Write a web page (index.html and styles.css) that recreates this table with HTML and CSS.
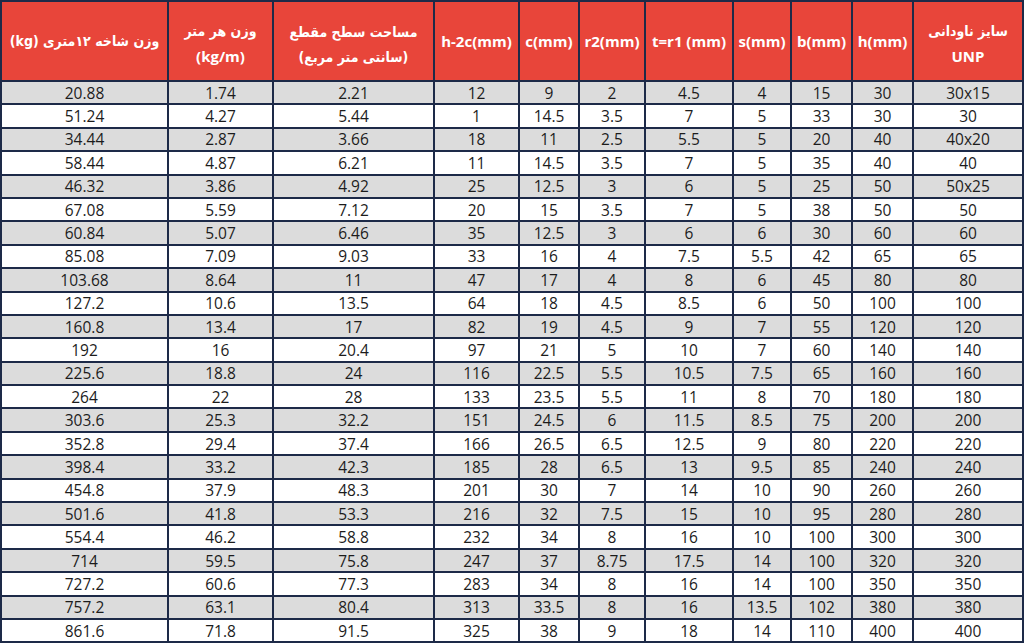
FILE: index.html
```html
<!DOCTYPE html>
<html lang="fa">
<head>
<meta charset="utf-8">
<title>UNP</title>
<link rel="stylesheet" href="styles.css">
</head>
<body>
<table class="unp">
<colgroup>
<col class="c1"><col class="c2"><col class="c3"><col class="c4"><col class="c5"><col class="c6"><col class="c7"><col class="c8"><col class="c9"><col class="c10"><col class="c11">
</colgroup>
<thead>
<tr>
<th dir="rtl" class="fa">وزن شاخه ۱۲متری (kg)</th>
<th dir="rtl" class="fa two">وزن هر متر<br><span dir="ltr" class="lat">(kg/m)</span></th>
<th dir="rtl" class="fa two">مساحت سطح مقطع<br>(سانتی متر مربع)</th>
<th>h-2c(mm)</th>
<th>c(mm)</th>
<th>r2(mm)</th>
<th>t=r1 (mm)</th>
<th>s(mm)</th>
<th>b(mm)</th>
<th>h(mm)</th>
<th dir="rtl" class="fa two">سایز ناودانی<br><span class="lat">UNP</span></th>
</tr>
</thead>
<tbody>
<tr><td>20.88</td><td>1.74</td><td>2.21</td><td>12</td><td>9</td><td>2</td><td>4.5</td><td>4</td><td>15</td><td>30</td><td>30x15</td></tr>
<tr><td>51.24</td><td>4.27</td><td>5.44</td><td>1</td><td>14.5</td><td>3.5</td><td>7</td><td>5</td><td>33</td><td>30</td><td>30</td></tr>
<tr><td>34.44</td><td>2.87</td><td>3.66</td><td>18</td><td>11</td><td>2.5</td><td>5.5</td><td>5</td><td>20</td><td>40</td><td>40x20</td></tr>
<tr><td>58.44</td><td>4.87</td><td>6.21</td><td>11</td><td>14.5</td><td>3.5</td><td>7</td><td>5</td><td>35</td><td>40</td><td>40</td></tr>
<tr><td>46.32</td><td>3.86</td><td>4.92</td><td>25</td><td>12.5</td><td>3</td><td>6</td><td>5</td><td>25</td><td>50</td><td>50x25</td></tr>
<tr><td>67.08</td><td>5.59</td><td>7.12</td><td>20</td><td>15</td><td>3.5</td><td>7</td><td>5</td><td>38</td><td>50</td><td>50</td></tr>
<tr><td>60.84</td><td>5.07</td><td>6.46</td><td>35</td><td>12.5</td><td>3</td><td>6</td><td>6</td><td>30</td><td>60</td><td>60</td></tr>
<tr><td>85.08</td><td>7.09</td><td>9.03</td><td>33</td><td>16</td><td>4</td><td>7.5</td><td>5.5</td><td>42</td><td>65</td><td>65</td></tr>
<tr><td>103.68</td><td>8.64</td><td>11</td><td>47</td><td>17</td><td>4</td><td>8</td><td>6</td><td>45</td><td>80</td><td>80</td></tr>
<tr><td>127.2</td><td>10.6</td><td>13.5</td><td>64</td><td>18</td><td>4.5</td><td>8.5</td><td>6</td><td>50</td><td>100</td><td>100</td></tr>
<tr><td>160.8</td><td>13.4</td><td>17</td><td>82</td><td>19</td><td>4.5</td><td>9</td><td>7</td><td>55</td><td>120</td><td>120</td></tr>
<tr><td>192</td><td>16</td><td>20.4</td><td>97</td><td>21</td><td>5</td><td>10</td><td>7</td><td>60</td><td>140</td><td>140</td></tr>
<tr><td>225.6</td><td>18.8</td><td>24</td><td>116</td><td>22.5</td><td>5.5</td><td>10.5</td><td>7.5</td><td>65</td><td>160</td><td>160</td></tr>
<tr><td>264</td><td>22</td><td>28</td><td>133</td><td>23.5</td><td>5.5</td><td>11</td><td>8</td><td>70</td><td>180</td><td>180</td></tr>
<tr><td>303.6</td><td>25.3</td><td>32.2</td><td>151</td><td>24.5</td><td>6</td><td>11.5</td><td>8.5</td><td>75</td><td>200</td><td>200</td></tr>
<tr><td>352.8</td><td>29.4</td><td>37.4</td><td>166</td><td>26.5</td><td>6.5</td><td>12.5</td><td>9</td><td>80</td><td>220</td><td>220</td></tr>
<tr><td>398.4</td><td>33.2</td><td>42.3</td><td>185</td><td>28</td><td>6.5</td><td>13</td><td>9.5</td><td>85</td><td>240</td><td>240</td></tr>
<tr><td>454.8</td><td>37.9</td><td>48.3</td><td>201</td><td>30</td><td>7</td><td>14</td><td>10</td><td>90</td><td>260</td><td>260</td></tr>
<tr><td>501.6</td><td>41.8</td><td>53.3</td><td>216</td><td>32</td><td>7.5</td><td>15</td><td>10</td><td>95</td><td>280</td><td>280</td></tr>
<tr><td>554.4</td><td>46.2</td><td>58.8</td><td>232</td><td>34</td><td>8</td><td>16</td><td>10</td><td>100</td><td>300</td><td>300</td></tr>
<tr><td>714</td><td>59.5</td><td>75.8</td><td>247</td><td>37</td><td>8.75</td><td>17.5</td><td>14</td><td>100</td><td>320</td><td>320</td></tr>
<tr><td>727.2</td><td>60.6</td><td>77.3</td><td>283</td><td>34</td><td>8</td><td>16</td><td>14</td><td>100</td><td>350</td><td>350</td></tr>
<tr><td>757.2</td><td>63.1</td><td>80.4</td><td>313</td><td>33.5</td><td>8</td><td>16</td><td>13.5</td><td>102</td><td>380</td><td>380</td></tr>
<tr><td>861.6</td><td>71.8</td><td>91.5</td><td>325</td><td>38</td><td>9</td><td>18</td><td>14</td><td>110</td><td>400</td><td>400</td></tr>
</tbody>
</table>
</body>
</html>
```

FILE: styles.css
```css
html, body {
  margin: 0;
  padding: 0;
  background: #ffffff;
}

.unp {
  width: 1024px;
  table-layout: fixed;
  border-collapse: collapse;
  font-family: "Open Sans", "DejaVu Sans", sans-serif;
  color: #1c1c1c;
}

.c1 { width: 167px; }
.c2 { width: 105px; }
.c3 { width: 161px; }
.c4 { width: 85px; }
.c5 { width: 60px; }
.c6 { width: 66px; }
.c7 { width: 88px; }
.c8 { width: 58px; }
.c9 { width: 61px; }
.c10 { width: 61px; }
.c11 { width: 110px; }

.unp th,
.unp td {
  border: 2px solid #1d2a48;
  padding: 0;
  text-align: center;
  vertical-align: middle;
  overflow: hidden;
  white-space: nowrap;
}

.unp th {
  height: 78px;
  background: #e8453a;
  color: #ffffff;
  font-weight: 700;
  font-size: 15px;
  line-height: 25px;
}

.unp th.fa {
  font-family: "DejaVu Sans Condensed", "DejaVu Sans", sans-serif;
  font-size: 14px;
}

.unp th.two {
  padding-top: 7px;
  height: 71px;
}

.unp th .lat {
  font-family: "Open Sans", sans-serif;
  font-size: 15px;
}

.unp td {
  height: 21.4px;
  font-size: 15.5px;
  line-height: 20px;
}

.unp tbody tr:nth-child(odd) td {
  background: #dcdcdc;
}

.unp tbody tr:nth-child(even) td {
  background: #ffffff;
}
```
